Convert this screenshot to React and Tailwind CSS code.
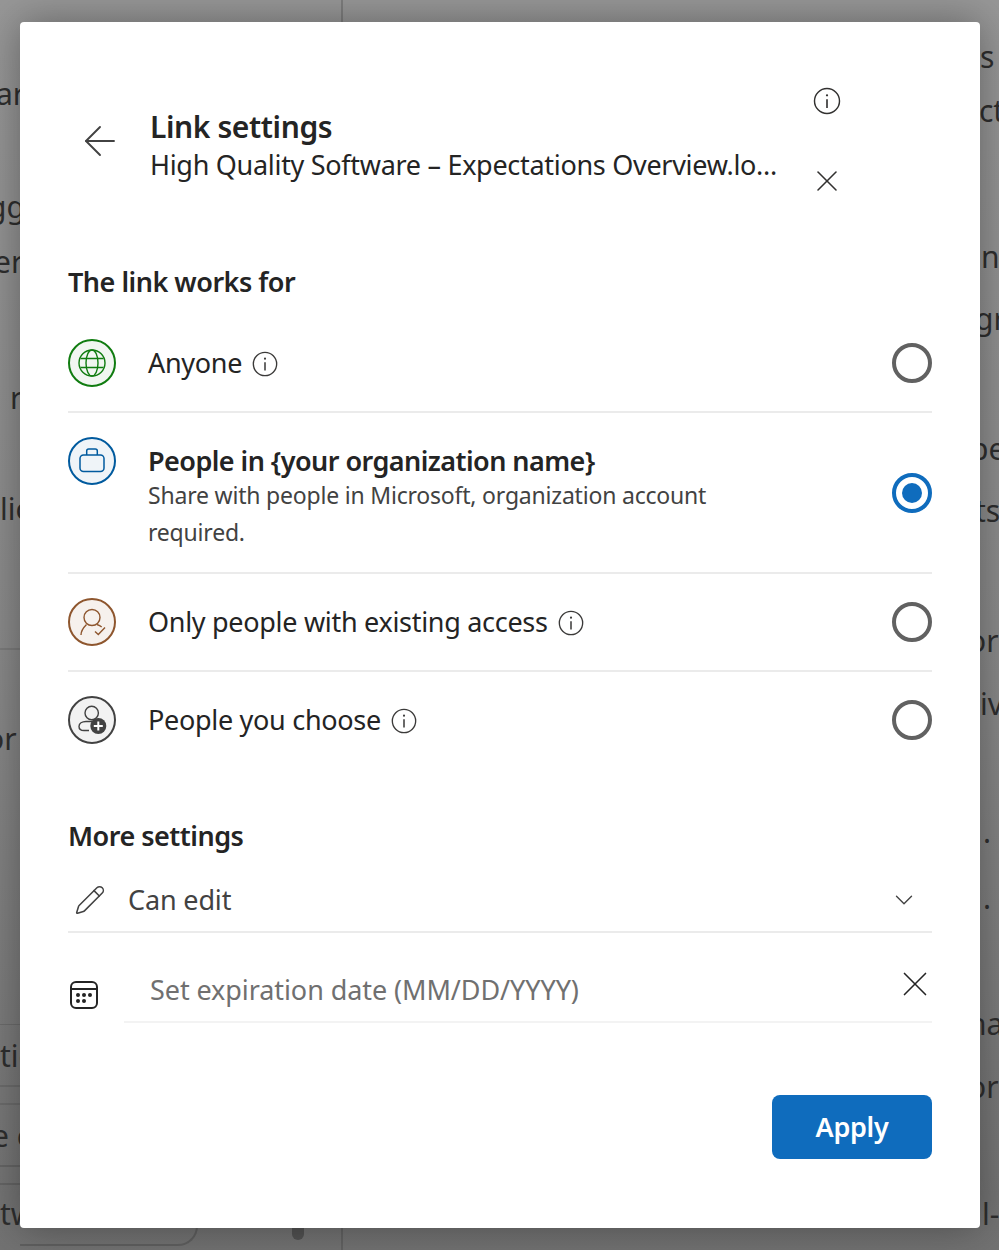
import React from "react";
import { ChevronDown, X, ArrowLeft, Pencil } from "lucide-react";

const peeks = [
  ["ar", "left-[-4px] top-[74px]"],
  ["gg", "left-[-12px] top-[187px]"],
  ["er", "left-[-6px] top-[242px]"],
  ["r", "left-[10px] top-[378px]"],
  ["lic", "left-[0px] top-[489px]"],
  ["or", "left-[-14px] top-[719px]"],
  ["tic", "left-[0px] top-[1036px]"],
  ["e c", "left-[-8px] top-[1116px]"],
  ["tw", "left-[0px] top-[1194px]"],
  ["s", "left-[980px] top-[37px]"],
  ["ect", "left-[962px] top-[91px]"],
  ["n", "left-[981px] top-[237px]"],
  ["gr", "left-[975px] top-[299px]"],
  ["pe", "left-[970px] top-[429px]"],
  ["ts", "left-[975px] top-[491px]"],
  ["or", "left-[968px] top-[621px]"],
  ["iv", "left-[980px] top-[684px]"],
  [".", "left-[983px] top-[812px]"],
  [".", "left-[983px] top-[878px]"],
  ["ha", "left-[968px] top-[1004px]"],
  ["or", "left-[968px] top-[1067px]"],
  ["l-", "left-[982px] top-[1194px]"],
];

function InfoIcon({ size, className }) {
  return (
    <svg width={size} height={size} viewBox="0 0 24 24" fill="none" stroke="currentColor" className={className}>
      <circle cx="12" cy="12" r="10" strokeWidth="1.15" />
      <path d="M12 10.5V17.5" strokeWidth="1.3" />
      <circle cx="12" cy="7.4" r="0.9" fill="currentColor" stroke="none" />
    </svg>
  );
}

function Radio({ checked }) {
  if (checked) {
    return (
      <span className="block w-10 h-10 rounded-full border-[4px] border-[#0f6cbd] p-[6px]">
        <span className="block w-5 h-5 rounded-full bg-[#0f6cbd]" />
      </span>
    );
  }
  return <span className="block w-10 h-10 rounded-full border-[4px] border-[#616161]" />;
}

function Badge({ className, children }) {
  return (
    <span className={`w-12 h-12 rounded-full border-2 flex items-center justify-center shrink-0 ${className}`}>
      {children}
    </span>
  );
}

function Divider() {
  return <div className="h-[2px] bg-[#ebebeb]" />;
}

function Option({ badge, label }) {
  return (
    <div className="h-[96px] flex items-center">
      {badge}
      <span className="ml-[32px] text-[27px] leading-9 tracking-[-0.3px] text-[#242424]">{label}</span>
      <InfoIcon size={28} className="ml-[9px] mt-[2px] text-[#3b3a39] shrink-0" />
      <span className="ml-auto">
        <Radio />
      </span>
    </div>
  );
}

export default function App() {
  return (
    <div className="relative w-[999px] h-[1250px] overflow-hidden bg-gradient-to-b from-[#979797] via-[#8a8a8a] to-[#727272] font-['Noto_Sans',sans-serif]">
      {/* page behind the dialog */}
      {peeks.map(([text, pos], i) => (
        <span key={i} className={`absolute text-[30px] leading-10 text-[#2e2e2e] ${pos}`}>
          {text}
        </span>
      ))}
      <div className="absolute left-[341px] top-0 w-[2px] h-[22px] bg-[#7d7d7d]" />
      <div className="absolute left-[341px] top-[1228px] w-[2px] h-[22px] bg-[#626262]" />
      <div className="absolute left-0 top-[648px] w-[20px] h-[2px] bg-[#7b7b7b]" />
      <div className="absolute left-0 top-[1024px] w-[20px] h-[1px] bg-[#6b6b6b]" />
      <div className="absolute left-0 top-[1085px] w-[20px] h-[2px] bg-[#6b6b6b]" />
      <div className="absolute left-0 top-[1103px] w-[20px] h-[2px] bg-[#6b6b6b]" />
      <div className="absolute left-0 top-[1165px] w-[20px] h-[2px] bg-[#656565]" />
      <div className="absolute left-0 top-[1183px] w-[20px] h-[2px] bg-[#656565]" />
      <div className="absolute left-[20px] top-[1200px] w-[178px] h-[46px] rounded-br-[20px] border-r-2 border-b-2 border-[#5f5f5f]" />
      <div className="absolute left-[292px] top-[1220px] w-[12px] h-[20px] rounded-full bg-[#525252]" />

      <div className="absolute left-[20px] top-[22px] w-[960px] h-[1206px] bg-white rounded-[4px] shadow-[0_0_40px_rgba(0,0,0,0.35)] px-12">
        {/* header */}
        <div className="flex h-[196px]">
          <div className="w-[82px] pt-[95px] pl-[8px]">
            <ArrowLeft size={48} strokeWidth={0.95} className="text-[#424242]" />
          </div>
          <div className="w-[636px] pt-[85px]">
            <h1 className="text-[30px] leading-[40px] font-semibold tracking-[-0.4px] text-[#242424]">Link settings</h1>
            <p className="text-[27px] leading-[36px] tracking-[-0.3px] text-[#242424] truncate">
              High Quality Software – Expectations Overview.lo...
            </p>
          </div>
          <div className="flex flex-col items-center w-[28px] ml-[27px] pt-[64px]">
            <InfoIcon size={30} className="text-[#323130] shrink-0" />
            <X size={36} strokeWidth={1.05} className="text-[#323130] shrink-0 mt-[47px]" />
          </div>
        </div>

        {/* who the link works for */}
        <h2 className="text-[27px] leading-[38px] font-semibold tracking-[-0.5px] text-[#242424] mt-[45px]">The link works for</h2>
        <div className="mt-[14px]">
          <Option
            label="Anyone"
            badge={
              <Badge className="border-[#107c10] bg-[#f1f6f1]">
                <svg width="30" height="30" viewBox="0 0 30 30" fill="none" stroke="#107c10" strokeWidth="1.4">
                  <circle cx="15" cy="15" r="13" />
                  <ellipse cx="15" cy="15" rx="6" ry="13" />
                  <path d="M3.5 10.5H26.5M3.5 19.5H26.5" />
                </svg>
              </Badge>
            }
          />
          <Divider />
          <div className="h-[159px] flex items-start pt-[24px]">
            <Badge className="border-[#005a9e] bg-[#eff4f8]">
              <svg width="28" height="28" viewBox="0 0 28 28" fill="none" stroke="#005a9e" strokeWidth="1.5">
                <rect x="2" y="8" width="24" height="16.5" rx="3.5" />
                <path d="M8.7 8V4A2 2 0 0 1 10.7 2H17.3A2 2 0 0 1 19.3 4V8" />
              </svg>
            </Badge>
            <div className="ml-[32px] w-[620px]">
              <div className="text-[27px] leading-[36px] mt-[6px] font-semibold tracking-[-0.55px] text-[#242424]">
                People in {"{your organization name}"}
              </div>
              <p className="text-[23px] leading-[37px] mt-[-2px] tracking-[-0.2px] text-[#424242]">
                Share with people in Microsoft, organization account required.
              </p>
            </div>
            <span className="ml-auto mt-[36px]">
              <Radio checked />
            </span>
          </div>
          <Divider />
          <Option
            label="Only people with existing access"
            badge={
              <Badge className="border-[#8e562e] bg-[#f6f1ed]">
                <svg width="30" height="30" viewBox="0 0 30 30" fill="none" stroke="#8e562e" strokeWidth="1.4">
                  <circle cx="15" cy="10.5" r="8" />
                  <path d="M4 28C4 23.5 6.5 20.5 9.5 17.5" />
                  <path d="M20 17.5C22 18.2 23.5 19 24.7 20" />
                  <path d="M18 24.5L21.3 27.5L28 20.5" />
                </svg>
              </Badge>
            }
          />
          <Divider />
          <Option
            label="People you choose"
            badge={
              <Badge className="border-[#424242] bg-[#f2f2f2]">
                <svg width="32" height="32" viewBox="0 0 32 32" fill="none">
                  <circle cx="15.7" cy="9" r="6.7" stroke="#424242" strokeWidth="1.4" />
                  <path d="M13 26.5H8C5 26.5 3 25 3 22.5C3 19.5 6 17.5 10 17.5H16" stroke="#424242" strokeWidth="1.4" />
                  <circle cx="22.3" cy="22" r="8" fill="#424242" />
                  <path d="M22.3 17.5V26.5M17.8 22H26.8" stroke="#fff" strokeWidth="2" />
                </svg>
              </Badge>
            }
          />
        </div>

        {/* more settings */}
        <h2 className="text-[27px] leading-[38px] font-semibold tracking-[-0.5px] text-[#242424] mt-[49px]">More settings</h2>
        <div className="h-[63px] mt-[13px] flex items-center">
          <Pencil size={32} strokeWidth={1.15} className="text-[#424242] ml-[6px]" />
          <span className="ml-[22px] mt-[2px] text-[27px] tracking-[-0.15px] text-[#424242]">Can edit</span>
          <ChevronDown size={30} strokeWidth={1.1} className="text-[#424242] ml-auto mr-[13px]" />
        </div>
        <Divider />
        <div className="flex items-center h-[90px]">
          <svg width="30" height="30" viewBox="0 0 30 30" fill="none" className="ml-[1px] mt-[34px] shrink-0">
            <rect x="2" y="2" width="26" height="26" rx="5" stroke="#242424" strokeWidth="2" />
            <path d="M2 9H28" stroke="#242424" strokeWidth="2" />
            <circle cx="9" cy="15" r="2" fill="#242424" />
            <circle cx="15" cy="15" r="2" fill="#242424" />
            <circle cx="21" cy="15" r="2" fill="#242424" />
            <circle cx="9" cy="21" r="2" fill="#242424" />
            <circle cx="15" cy="21" r="2" fill="#242424" />
          </svg>
          <div className="ml-[25px] flex-1 h-full flex items-center border-b-2 border-[#f3f3f3]">
            <span className="ml-[26px] mt-[27px] text-[27px] tracking-[-0.08px] text-[#707070]">Set expiration date (MM/DD/YYYY)</span>
            <X size={42} strokeWidth={0.95} className="text-[#242424] ml-auto mr-[-4px] mt-[13px]" />
          </div>
        </div>

        <div className="flex justify-end mt-[72px]">
          <button className="w-[160px] h-[64px] rounded-[8px] bg-[#0f6cbd] text-white text-[27px] font-semibold tracking-[-0.3px]">
            Apply
          </button>
        </div>
      </div>
    </div>
  );
}
